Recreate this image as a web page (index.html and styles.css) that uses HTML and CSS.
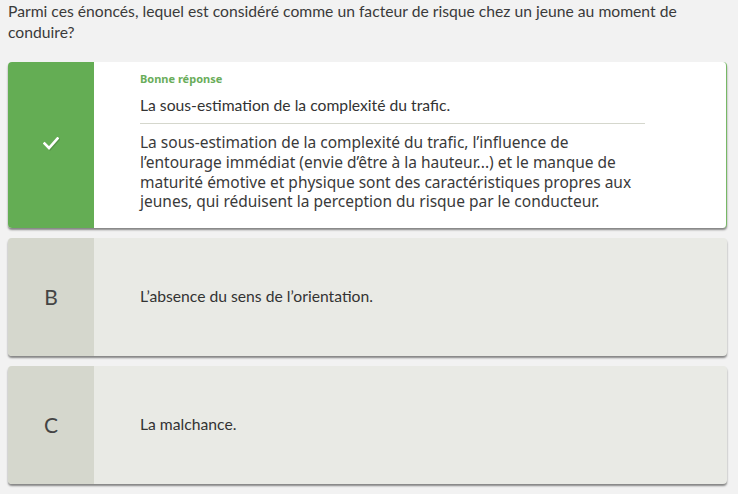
FILE: index.html
```html
<!DOCTYPE html>
<html lang="fr">
<head>
<meta charset="utf-8">
<link rel="stylesheet" href="styles.css">
</head>
<body>
<p class="question">Parmi ces énoncés, lequel est considéré comme un facteur de risque chez un jeune au moment de conduire?</p>
<div class="choices">
  <div class="card correct">
    <div class="mark">
      <svg width="16" height="13" viewBox="0 0 16 13"><path d="M1.5 6.5 L6 11 L14.5 1.5" fill="none" stroke="#fff" stroke-width="2.6" stroke-linecap="square"/></svg>
    </div>
    <div class="body">
      <div class="label">Bonne réponse</div>
      <div class="answer">La sous-estimation de la complexité du trafic.</div>
      <div class="explain">La sous-estimation de la complexité du trafic, l’influence de l’entourage immédiat (envie d’être à la hauteur...) et le manque de maturité émotive et physique sont des caractéristiques propres aux jeunes, qui réduisent la perception du risque par le conducteur.</div>
    </div>
  </div>
  <div class="card">
    <div class="mark letter">B</div>
    <div class="body center"><div class="answer plain">L’absence du sens de l’orientation.</div></div>
  </div>
  <div class="card">
    <div class="mark letter">C</div>
    <div class="body center"><div class="answer plain">La malchance.</div></div>
  </div>
</div>
</body>
</html>
```
FILE: styles.css
```css
html, body { margin: 0; padding: 0; }
body {
  background: #f2f2f2;
  font-family: Lato, "Liberation Sans", sans-serif;
  color: #333;
  width: 738px;
  height: 494px;
  overflow: hidden;
}
.question {
  margin: 0;
  padding: 1px 8px 0 8px;
  font-size: 15.7px;
  line-height: 20.5px;
  color: #3a3a3a;
}
.choices {
  display: flex;
  flex-direction: column;
  gap: 10px;
  padding: 20px 11px 0 8px;
}
.card {
  display: flex;
  border-radius: 4px;
  overflow: hidden;
  background: #e9eae5;
  box-shadow: 0 2px 2px rgba(0,0,0,0.45);
  min-height: 118px;
}
.card.correct {
  background: #fff;
  border-right: 1px solid #77b866;
  min-height: 166px;
}
.mark {
  width: 86px;
  flex: none;
  display: flex;
  align-items: center;
  justify-content: center;
  background: #d5d7cd;
}
.correct .mark { background: #64ad54; padding-bottom: 3px; box-sizing: border-box; }
.mark svg { filter: drop-shadow(1px 1px 0 rgba(0,0,0,0.15)); }
.letter {
  font-size: 21px;
  color: #444;
  padding-bottom: 2px;
  box-sizing: border-box;
}
.body {
  flex: 1;
  padding: 9px 81px 12px 46px;
}
.body.center {
  display: flex;
  align-items: center;
  padding-top: 0;
  padding-bottom: 0;
}
.label {
  font-family: "Noto Sans", sans-serif;
  font-weight: bold;
  font-size: 11px;
  line-height: 15px;
  color: #6aad5a;
}
.answer {
  font-size: 15.7px;
  line-height: 20px;
  color: #333;
  margin-top: 9px;
  padding-bottom: 8px;
  border-bottom: 1px solid #d5d7cd;
}
.answer.plain {
  border: none;
  margin: 0;
  padding: 0;
  padding-bottom: 2px;
}
.explain {
  font-family: "Noto Sans", sans-serif;
  font-size: 15.5px;
  line-height: 19.8px;
  color: #3a3a3a;
  margin-top: 9px;
}
```
